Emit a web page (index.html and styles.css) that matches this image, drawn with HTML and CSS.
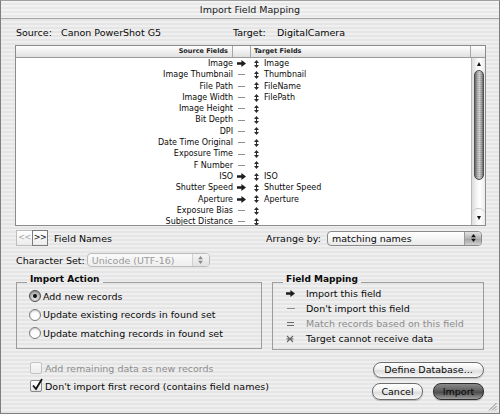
FILE: index.html
```html
<!DOCTYPE html>
<html>
<head>
<meta charset="utf-8">
<title>Import Field Mapping</title>
<link rel="stylesheet" href="styles.css">
</head>
<body>
<svg class="defs" aria-hidden="true">
  <symbol id="arr" viewBox="0 0 9 7"><path d="M0 2.2h4.4V0L9 3.5 4.4 7V4.8H0z"/></symbol>
  <symbol id="hnd" viewBox="0 0 5 8"><path d="M2.5 0L5 3H0z M0 5H5L2.5 8z M2 2.6h1v2.8H2z"/></symbol>
  <symbol id="ud" viewBox="0 0 6 10"><path d="M3 0L6 4H0z M0 6H6L3 10z"/></symbol>
</svg>
<div class="window">
  <div class="titlebar">Import Field Mapping</div>
  <div class="content">
    <div class="srcrow">
      <div class="src"><span class="lbl-src">Source:</span><span>Canon PowerShot G5</span></div>
      <div class="tgt"><span class="lbl-tgt">Target:</span><span>DigitalCamera</span></div>
    </div>

    <div class="list">
      <div class="list-head">
        <div class="h-src">Source Fields</div>
        <div class="h-mid"></div>
        <div class="h-tgt">Target Fields</div>
        <div class="h-corner"></div>
      </div>
      <div class="list-body">
        <div class="rows">
          <div class="row"><span class="s">Image</span><span class="m"><svg class="arr"><use href="#arr"/></svg></span><span class="t"><svg class="hnd"><use href="#hnd"/></svg><span>Image</span></span></div>
          <div class="row"><span class="s">Image Thumbnail</span><span class="m"><i class="dash"></i></span><span class="t"><svg class="hnd"><use href="#hnd"/></svg><span>Thumbnail</span></span></div>
          <div class="row"><span class="s">File Path</span><span class="m"><i class="dash"></i></span><span class="t"><svg class="hnd"><use href="#hnd"/></svg><span>FileName</span></span></div>
          <div class="row"><span class="s">Image Width</span><span class="m"><i class="dash"></i></span><span class="t"><svg class="hnd"><use href="#hnd"/></svg><span>FilePath</span></span></div>
          <div class="row"><span class="s">Image Height</span><span class="m"><i class="dash"></i></span><span class="t"><svg class="hnd"><use href="#hnd"/></svg></span></div>
          <div class="row"><span class="s">Bit Depth</span><span class="m"><i class="dash"></i></span><span class="t"><svg class="hnd"><use href="#hnd"/></svg></span></div>
          <div class="row"><span class="s">DPI</span><span class="m"><i class="dash"></i></span><span class="t"><svg class="hnd"><use href="#hnd"/></svg></span></div>
          <div class="row"><span class="s">Date Time Original</span><span class="m"><i class="dash"></i></span><span class="t"><svg class="hnd"><use href="#hnd"/></svg></span></div>
          <div class="row"><span class="s">Exposure Time</span><span class="m"><i class="dash"></i></span><span class="t"><svg class="hnd"><use href="#hnd"/></svg></span></div>
          <div class="row"><span class="s">F Number</span><span class="m"><i class="dash"></i></span><span class="t"><svg class="hnd"><use href="#hnd"/></svg></span></div>
          <div class="row"><span class="s">ISO</span><span class="m"><svg class="arr"><use href="#arr"/></svg></span><span class="t"><svg class="hnd"><use href="#hnd"/></svg><span>ISO</span></span></div>
          <div class="row"><span class="s">Shutter Speed</span><span class="m"><svg class="arr"><use href="#arr"/></svg></span><span class="t"><svg class="hnd"><use href="#hnd"/></svg><span>Shutter Speed</span></span></div>
          <div class="row"><span class="s">Aperture</span><span class="m"><svg class="arr"><use href="#arr"/></svg></span><span class="t"><svg class="hnd"><use href="#hnd"/></svg><span>Aperture</span></span></div>
          <div class="row"><span class="s">Exposure Bias</span><span class="m"><i class="dash"></i></span><span class="t"><svg class="hnd"><use href="#hnd"/></svg></span></div>
          <div class="row"><span class="s">Subject Distance</span><span class="m"><i class="dash"></i></span><span class="t"><svg class="hnd"><use href="#hnd"/></svg></span></div>
        </div>
        <div class="scrollbar">
          <div class="sb-up"><i class="tri-up"></i></div>
          <div class="thumb"></div>
          <div class="sb-track"></div>
          <div class="sb-down"><i class="tri-down"></i></div>
        </div>
      </div>
    </div>

    <div class="navrow">
      <div class="navbtn dis">&lt;&lt;</div><div class="navbtn">&gt;&gt;</div>
      <span class="navlbl">Field Names</span>
      <span class="arrange">Arrange by:</span>
      <div class="popup wide"><span class="ptext">matching names</span><span class="knob"><svg><use href="#ud"/></svg></span></div>
    </div>

    <div class="charrow">
      <span>Character Set:</span>
      <div class="popup narrow disabled"><span class="ptext">Unicode (UTF-16)</span><span class="knob"><svg><use href="#ud"/></svg></span></div>
    </div>

    <div class="groups">
      <div class="group g-action">
        <div class="g-head"><i class="seg-l"></i><span class="g-title">Import Action</span><i class="seg-r"></i></div>
        <div class="g-body">
          <div class="opt"><i class="radio on"><b></b></i><span>Add new records</span></div>
          <div class="opt"><i class="radio"></i><span>Update existing records in found set</span></div>
          <div class="opt"><i class="radio"></i><span>Update matching records in found set</span></div>
        </div>
      </div>
      <div class="group g-map">
        <div class="g-head"><i class="seg-l"></i><span class="g-title">Field Mapping</span><i class="seg-r"></i></div>
        <div class="g-body">
          <div class="leg"><span class="ico"><svg class="arr"><use href="#arr"/></svg></span><span>Import this field</span></div>
          <div class="leg"><span class="ico"><i class="ldash"></i></span><span>Don't import this field</span></div>
          <div class="leg dimmed"><span class="ico"><i class="eq"></i></span><span>Match records based on this field</span></div>
          <div class="leg"><span class="ico"><svg class="xico" viewBox="0 0 8 8"><path d="M1 1L7 7M7 1L1 7M0.5 4H7.5"/></svg></span><span>Target cannot receive data</span></div>
        </div>
      </div>
    </div>

    <div class="bottom">
      <div class="checks">
        <div class="chk dis"><i class="box"></i><span>Add remaining data as new records</span></div>
        <div class="chk"><i class="box"><svg class="tick" viewBox="0 0 12 13"><path d="M2 7.5L5 11L11 1"/></svg></i><span>Don't import first record (contains field names)</span></div>
      </div>
      <div class="buttons">
        <div class="btn define">Define Database...</div>
        <div class="btnrow">
          <div class="btn cancel">Cancel</div>
          <div class="btn import">Import</div>
        </div>
      </div>
    </div>
  </div>
  <svg class="grip" viewBox="0 0 9 9"><path d="M8.5 1L1 8.5M8.5 4L4 8.5M8.5 7L7 8.5"/></svg>
</div>
</body>
</html>
```

FILE: styles.css
```css
* { box-sizing: border-box; }
html, body { margin: 0; padding: 0; }
body {
  width: 500px;
  height: 414px;
  overflow: hidden;
  font-family: "DejaVu Sans", "Noto Sans", sans-serif;
  font-size: 9.5px;
  color: #0a0a0a;
  background: #e8e8e8;
}
i, b { display: block; font-style: normal; }
.defs { position: absolute; width: 0; height: 0; overflow: hidden; }

.window {
  position: relative;
  width: 500px;
  height: 414px;
  border: 1px solid #7e7e7e;
  border-top-color: #a0a0a0;
  background: repeating-linear-gradient(to bottom, #efefef 0 2px, #e5e5e5 2px 4px);
  display: flex;
  flex-direction: column;
}
.titlebar {
  flex: none;
  height: 18px;
  line-height: 17px;
  text-align: center;
  color: #1a1a1a;
  border-bottom: 1px solid #a4a4a4;
  background: repeating-linear-gradient(to bottom, #f2f2f2 0 2px, #e8e8e8 2px 4px);
}
.content {
  flex: 1;
  display: flex;
  flex-direction: column;
  padding: 0 13px 0 14px;
}

/* source / target line */
.srcrow { display: flex; margin-top: 7px; height: 14px; line-height: 14px; }
.src { width: 218px; padding-left: 1px; display: flex; }
.lbl-src { width: 45px; }
.tgt { display: flex; }
.lbl-tgt { width: 44px; }

/* list */
.list {
  margin-top: 5px;
  height: 181px;
  border: 1px solid #8c8c8c;
  background: #fff;
  display: flex;
  flex-direction: column;
}
.list-head {
  display: grid;
  grid-template-columns: 217px 18px 220px 14px;
  height: 12px;
  border-bottom: 1px solid #9a9a9a;
  background: linear-gradient(#fefefe, #eeeeee 55%, #e0e0e0);
  font-size: 6.5px;
  font-weight: bold;
  line-height: 11px;
  color: #222;
}
.list-head > div { border-right: 1px solid #a6a6a6; }
.list-head > .h-corner { border-right: none; }
.h-src { text-align: right; padding-right: 4px; }
.h-tgt { padding-left: 3px; }

.list-body { flex: 1; display: flex; min-height: 0; }
.rows {
  width: 455px;
  overflow: hidden;
  font-size: 8px;
  line-height: 11.3px;
}
.row {
  display: grid;
  grid-template-columns: 217px 18px 220px;
  height: 11.3px;
}
.s { text-align: right; white-space: nowrap; }
.m { display: flex; align-items: center; padding-left: 4px; }
.arr { width: 9px; height: 7px; fill: #1c1c1c; }
.dash { width: 7px; height: 1px; background: #8e8e8e; margin-left: 1px; }
.t { display: flex; align-items: center; padding-left: 3px; white-space: nowrap; }
.hnd { width: 5px; height: 8px; flex: none; fill: #2a2a2a; }
.t span { margin-left: 5px; }

/* scrollbar */
.scrollbar {
  width: 14px;
  border-left: 1px solid #b8b8b8;
  display: flex;
  flex-direction: column;
  background: linear-gradient(90deg, #dcdcdc, #f4f4f4 35%, #ffffff 60%, #ebebeb);
}
.sb-up { height: 12px; display: flex; align-items: center; justify-content: center; }
.thumb {
  height: 110px;
  margin: 0 1.5px;
  border-radius: 5px;
  border: 1px solid #4e4e4e;
  background:
    repeating-linear-gradient(to bottom, rgba(255,255,255,0.08) 0 1px, rgba(0,0,0,0.05) 1px 2px),
    linear-gradient(90deg, #626262, #a9a9a9 30%, #cfcfcf 55%, #9c9c9c 80%, #686868);
}
.sb-track { flex: 1; }
.sb-down {
  height: 17px;
  display: flex;
  align-items: center;
  justify-content: center;
  border-top: 1px solid #c4c4c4;
  border-radius: 6px 6px 0 0;
  padding-top: 2px;
}
.tri-up { width: 0; height: 0; border-left: 2.5px solid transparent; border-right: 2.5px solid transparent; border-bottom: 4px solid #111; }
.tri-down { width: 0; height: 0; border-left: 2.5px solid transparent; border-right: 2.5px solid transparent; border-top: 4px solid #111; }

/* nav row */
.navrow { display: flex; align-items: center; margin-top: 4px; height: 16px; padding-left: 1px; }
.navbtn {
  width: 16px;
  height: 16px;
  border: 1px solid #7a7a7a;
  background: linear-gradient(#ffffff, #ececec);
  font-size: 8px;
  line-height: 14px;
  text-align: center;
  letter-spacing: -0.5px;
}
.navbtn.dis { border-color: #bdbdbd; color: #a8a8a8; border-right: none; }
.navlbl { margin-left: 6px; }
.arrange { margin-left: auto; }

.popup {
  display: flex;
  align-items: center;
  border: 1px solid #8a8a8a;
  border-radius: 4px;
  background: linear-gradient(#ffffff, #f2f2f2 60%, #e9e9e9);
  overflow: hidden;
}
.popup.wide { width: 155px; height: 15px; margin-left: 6px; margin-right: 4px; }
.popup.narrow { width: 123px; height: 14px; margin-left: 2px; }
.ptext { flex: 1; padding-left: 4px; white-space: nowrap; line-height: 13px; }
.knob {
  width: 17px;
  align-self: stretch;
  display: flex;
  align-items: center;
  justify-content: center;
  border-left: 1px solid #9a9a9a;
  background: linear-gradient(#e2e2e2, #b4b4b4 50%, #a0a0a0 51%, #d0d0d0);
}
.knob svg { width: 5px; height: 8px; fill: #111; }
.popup.disabled { border-color: #bcbcbc; color: #9a9a9a; background: linear-gradient(#fafafa, #eeeeee); }
.popup.disabled .knob { border-left-color: #d0d0d0; background: linear-gradient(#f4f4f4, #e2e2e2); }
.popup.disabled .knob svg { fill: #8a8a8a; }

.charrow { display: flex; align-items: center; margin-top: 7px; height: 14px; padding-left: 1px; }

/* group boxes */
.groups { display: flex; gap: 10px; margin-top: 6px; padding-left: 1px; }
.group { display: flex; flex-direction: column; }
.g-action { width: 246px; }
.g-map { width: 212px; }
.g-head { display: flex; height: 12px; }
.seg-l { width: 11px; margin-top: 9px; border-top: 1px solid #9c9c9c; border-left: 1px solid #9c9c9c; }
.seg-r { flex: 1; margin-top: 9px; border-top: 1px solid #9c9c9c; border-right: 1px solid #9c9c9c; }
.g-title { padding: 0 3px; font-weight: bold; font-size: 9px; line-height: 12px; }
.g-body {
  height: 64px;
  border: 1px solid #9c9c9c;
  border-top: none;
}
.g-action .g-body { padding: 2px 0 0 12px; }
.opt { display: flex; align-items: center; height: 18.5px; }
.opt span { margin-left: 2px; }
.radio {
  width: 12px;
  height: 12px;
  border-radius: 50%;
  border: 1px solid #7c7c7c;
  background: radial-gradient(circle at 50% 70%, #ffffff 40%, #e2e2e2);
  box-shadow: inset 0 1px 1px rgba(0,0,0,0.15);
  flex: none;
}
.radio.on {
  border-color: #4e4e4e;
  background: radial-gradient(circle at 50% 70%, #dadada 20%, #8c8c8c);
  display: flex;
  align-items: center;
  justify-content: center;
}
.radio.on b { width: 4px; height: 4px; border-radius: 50%; background: #0e0e0e; }

.g-map .g-body { padding: 1px 0 0 13px; height: 65px; }
.leg { display: flex; align-items: center; height: 15px; }
.ico { width: 10px; margin-right: 10px; display: flex; align-items: center; }
.ldash { width: 8px; height: 1px; background: #8e8e8e; margin-left: 1px; }
.eq { width: 7px; height: 4px; margin-left: 1px; border-top: 1.5px solid #6a6a6a; border-bottom: 1.5px solid #6a6a6a; }
.xico { width: 8px; height: 8px; fill: none; stroke: #666; stroke-width: 1.1; }
.leg.dimmed { color: #8c8c8c; }

/* bottom */
.bottom { display: flex; }
.checks { display: flex; flex-direction: column; gap: 2px; margin-top: 10px; padding-left: 15px; }
.chk { display: flex; align-items: center; height: 16px; }
.chk span { margin-left: 3px; }
.box {
  position: relative;
  width: 12px;
  height: 12px;
  border: 1px solid #8a8a8a;
  border-radius: 2px;
  background: linear-gradient(#ffffff, #e6e6e6);
  flex: none;
}
.chk.dis { color: #8e8e8e; }
.chk.dis .box { border-color: #c2c2c2; background: linear-gradient(#f8f8f8, #ececec); }
.tick { position: absolute; left: 0; top: -3px; width: 12px; height: 13px; fill: none; stroke: #111; stroke-width: 1.8; }

.buttons {
  margin-left: auto;
  margin-right: 2px;
  margin-top: 12px;
  display: flex;
  flex-direction: column;
  align-items: flex-end;
}
.btnrow { display: flex; gap: 10px; margin-top: 5px; }
.btn {
  height: 16px;
  border: 1px solid #6e6e6e;
  border-radius: 8px;
  background: linear-gradient(#ffffff, #efefef 45%, #dddddd 55%, #f8f8f8);
  text-align: center;
  line-height: 14px;
  box-shadow: 0 1px 1px rgba(0,0,0,0.2);
}
.define { width: 111px; }
.cancel { width: 51px; height: 17px; line-height: 15px; }
.import {
  width: 51px;
  height: 17px;
  line-height: 15px;
  border-color: #2e2e2e;
  background: linear-gradient(#8a8a8a, #5e5e5e 45%, #4c4c4c 55%, #9c9c9c);
  color: #050505;
}
.grip {
  position: absolute;
  right: 2px;
  bottom: 2px;
  width: 9px;
  height: 9px;
  fill: none;
  stroke: #8a8a8a;
  stroke-width: 1;
}
```
